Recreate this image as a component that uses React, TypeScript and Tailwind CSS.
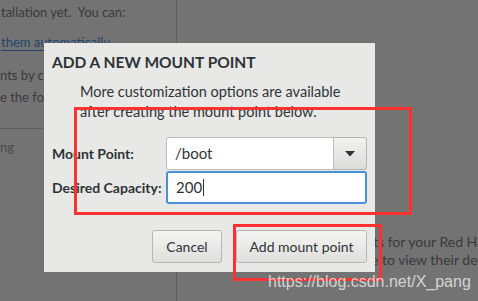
import React from "react";

export default function App() {
  const font = { fontFamily: 'Lato, "Noto Sans", sans-serif' };
  return (
    <div className="relative w-[478px] h-[301px] overflow-hidden bg-[#737373] text-[#3a3a3a]" style={font}>
      {/* background application */}
      <div className="flex h-full">
        <div className="w-[177px] h-full border-r border-[#5c5c5c] flex flex-col text-[13px] leading-[20px] overflow-hidden">
          <div className="pt-[2px] pl-[1px] whitespace-nowrap">tallation yet.&nbsp; You can:</div>
          <div className="mt-[10px] pl-[1px] whitespace-nowrap text-[#24436f] underline underline-offset-[3px]">them automatically</div>
          <div className="mt-[13px] whitespace-nowrap">nts by clicking</div>
          <div className="mt-[2px] whitespace-nowrap">e the following</div>
          <div className="mt-[21px] h-px bg-[#5f5f5f] w-full" />
          <div className="mt-[8px] whitespace-nowrap text-[#4a4a4a]">ng</div>
        </div>
        <div className="flex-1 overflow-hidden flex flex-col justify-end pb-[32px] pl-[194px] text-[14px] leading-[18px] whitespace-nowrap">
          <div className="pl-[2px]">ts for your Red Hat</div>
          <div>e to view their details</div>
        </div>
      </div>

      {/* dialog */}
      <div className="absolute left-[44px] top-[43px] w-[331px] h-[229px] bg-[#e8e8e7] text-[#2e3436] flex flex-col pl-[8px] pr-[8px]">
        <div className="pt-[8px] text-[15.5px] leading-[22px] font-bold whitespace-nowrap">ADD A NEW MOUNT POINT</div>
        <div className="mt-[9px] pl-[28px] text-[14.5px] leading-[20px] whitespace-nowrap">
          More customization options are available
          <br />
          after creating the mount point below.
        </div>
        <div className="mt-[15px] grid grid-cols-[114px_1fr] gap-y-[1px] items-center">
          <div className="text-[14px] font-bold whitespace-nowrap">Mount Point:</div>
          <div className="flex h-[33px]">
            <div className="flex-1 bg-white border border-[#bdbdb9] rounded-l-[3px] flex items-center pl-[8px] text-[15px]">/boot</div>
            <div className="w-[33px] border border-l-0 border-[#b6b6b3] rounded-r-[3px] bg-gradient-to-b from-[#f2f2f1] to-[#dcdcda] flex items-center justify-center">
              <svg width="10" height="6" viewBox="0 0 10 6"><path d="M0 0 H10 L5 5.5 Z" fill="#2e3436" /></svg>
            </div>
          </div>
          <div className="text-[14px] font-bold whitespace-nowrap">Desired Capacity:</div>
          <div className="h-[33px] bg-white border-2 border-[#4a90d9] rounded-[3px] flex items-center pl-[8px] text-[15px]">
            200<span className="inline-block w-px h-[17px] bg-[#2e3436] ml-[1px]" />
          </div>
        </div>
        <div className="mt-auto mb-[9px] flex justify-end gap-[14px]">
          <button className="w-[70px] h-[33px] rounded-[3px] border border-[#b6b6b3] bg-gradient-to-b from-[#f4f4f3] to-[#dfdfdd] text-[14px] text-[#2e3436]">Cancel</button>
          <button className="w-[131px] h-[33px] rounded-[3px] border border-[#b6b6b3] bg-gradient-to-b from-[#f4f4f3] to-[#dfdfdd] text-[14px] text-[#2e3436]">Add mount point</button>
        </div>
      </div>

      {/* annotations */}
      <div className="absolute left-[74px] top-[107px] w-[338px] h-[108px] border-[3px] border-[#fa3232]" />
      <div className="absolute left-[233px] top-[224px] w-[149px] h-[57px] border-[3px] border-[#fa3232]" />
      <div className="absolute left-[268px] top-[272px] text-[16px] leading-[20px] text-[#d4d4d4] whitespace-nowrap" style={{ fontFamily: '"Liberation Sans", Arial, sans-serif' }}>
        https://blog.csdn.net/X_pang
      </div>
    </div>
  );
}
